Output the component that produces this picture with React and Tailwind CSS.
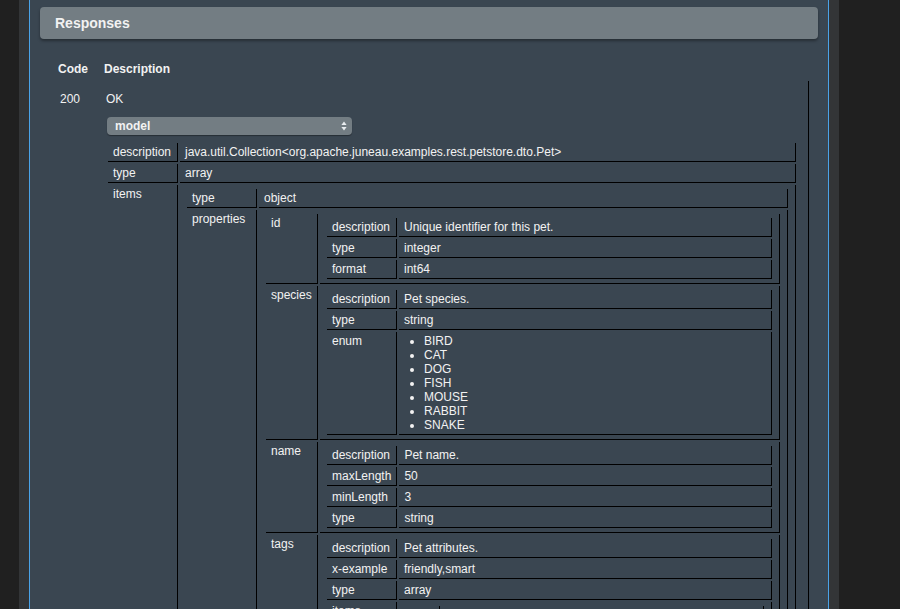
import React from "react";

const cell =
  "align-top border-r border-b border-black px-[5px] pt-[2px] pb-[2px] leading-[14px]";

const Grid = ({ children }) => (
  <table className="w-full border-separate border-spacing-[2px]">
    <tbody>{children}</tbody>
  </table>
);

const Row = ({ label, w, children }) => (
  <tr>
    <td className={`${cell} ${w}`}>{label}</td>
    <td className={cell}>{children}</td>
  </tr>
);

const Fields = ({ rows, w = "w-[70px]" }) => (
  <Grid>
    {rows.map(([k, v]) => (
      <Row key={k} label={k} w={w}>
        {v}
      </Row>
    ))}
  </Grid>
);

const SelectArrows = () => (
  <svg width="6" height="10" viewBox="0 0 6 10" className="shrink-0">
    <path d="M3 0.5 L5.6 4 L0.4 4 Z" fill="#e8ecef" />
    <path d="M3 9.5 L5.6 6 L0.4 6 Z" fill="#e8ecef" />
  </svg>
);

const enumValues = ["BIRD", "CAT", "DOG", "FISH", "MOUSE", "RABBIT", "SNAKE"];

const App = () => {
  const properties = [
    [
      "id",
      <Fields
        rows={[
          ["description", "Unique identifier for this pet."],
          ["type", "integer"],
          ["format", "int64"],
        ]}
      />,
    ],
    [
      "species",
      <Fields
        rows={[
          ["description", "Pet species."],
          ["type", "string"],
          [
            "enum",
            <ul className="list-disc pl-[20px]">
              {enumValues.map((e) => (
                <li key={e}>{e}</li>
              ))}
            </ul>,
          ],
        ]}
      />,
    ],
    [
      "name",
      <Fields
        rows={[
          ["description", "Pet name."],
          ["maxLength", "50"],
          ["minLength", "3"],
          ["type", "string"],
        ]}
      />,
    ],
    [
      "tags",
      <Fields
        rows={[
          ["description", "Pet attributes."],
          ["x-example", "friendly,smart"],
          ["type", "array"],
          ["items", <Fields w="w-[34px]" rows={[["type", "string"]]} />],
        ]}
      />,
    ],
  ];

  return (
    <div className="h-[609px] overflow-hidden bg-[#202020] font-['Liberation_Sans',Arial,sans-serif] text-[12px] text-[#f2f2f2]">
      <div className="ml-[19px] w-[820px] h-full bg-[#333537] px-[10px]">
        <div className="h-full border-x border-[#4aa3e8] bg-[#3a4651] pt-[7px]">
          {/* section header */}
          <div className="mx-[10px] h-[32px] rounded-[4px] bg-[#737d83] pl-[15px] text-[14px] font-bold leading-[32px] shadow-[0_2px_3px_rgba(0,0,0,0.35)]">
            Responses
          </div>

          <div className="pl-[21px] mt-[11px]">
            <table className="w-[760px] border-separate border-spacing-[2px]">
              <thead>
                <tr className="font-bold text-left">
                  <th className="w-[46px] pl-[5px] pt-[10px] pb-[3px] leading-[14px]">Code</th>
                  <th className="pl-[3px] pt-[10px] pb-[3px] leading-[14px]">Description</th>
                </tr>
              </thead>
              <tbody>
                <tr>
                  <td className="align-top pl-[7px] pt-[11px] leading-[14px]">200</td>
                  <td className="align-top border-r border-black pl-[5px] pr-[10px] pt-[11px] leading-[14px]">
                    <div>OK</div>
                    <div className="ml-[1px] mt-[11px] flex h-[18px] w-[245px] items-center justify-between rounded-[4px] bg-[#737d83] pl-[8px] pr-[5px] font-bold shadow-[0_1px_1px_rgba(0,0,0,0.35)]">
                      <span>model</span>
                      <SelectArrows />
                    </div>
                    <div className="mt-[6px]">
                      <Grid>
                        <Row label="description" w="w-[70px]">
                          {"java.util.Collection<org.apache.juneau.examples.rest.petstore.dto.Pet>"}
                        </Row>
                        <Row label="type" w="w-[70px]">
                          array
                        </Row>
                        <Row label="items" w="w-[70px]">
                          <Grid>
                            <Row label="type" w="w-[70px]">
                              object
                            </Row>
                            <Row label="properties" w="w-[70px]">
                              <Fields w="w-[52px]" rows={properties} />
                            </Row>
                          </Grid>
                        </Row>
                      </Grid>
                    </div>
                  </td>
                </tr>
              </tbody>
            </table>
          </div>
        </div>
      </div>
    </div>
  );
};

export default App;
